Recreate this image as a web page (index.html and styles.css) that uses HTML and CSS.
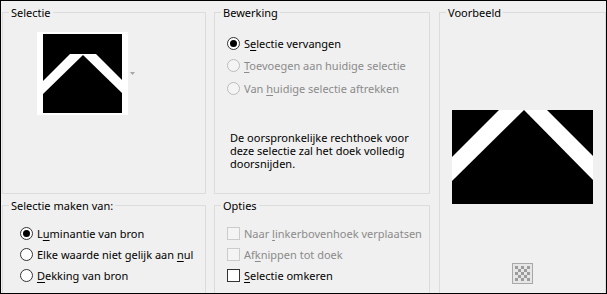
FILE: index.html
```html
<!DOCTYPE html>
<html>
<head>
<meta charset="utf-8">
<link rel="stylesheet" href="styles.css">
</head>
<body>
<div class="window">
  <section class="group g-sel">
    <div class="legend">Selectie</div>
    <div class="thumbrow">
      <div class="thumb">
        <svg width="79" height="79" viewBox="0 0 79 79"><rect width="79" height="79" fill="#000"/><polygon points="0,47 27,20 53,20 79,46 79,59 40,21 0,60" fill="#fff"/></svg>
      </div>
      <svg class="drop" width="5" height="3" viewBox="0 0 5 3"><polygon points="0,0 5,0 2.5,3" fill="#a6a6a6"/></svg>
    </div>
  </section>
  <section class="group g-bew">
    <div class="legend">Bewerking</div>
    <div class="rows rows-bew">
      <div class="opt"><span class="radio on"></span><span>S<u>e</u>lectie vervangen</span></div>
      <div class="opt dis"><span class="radio"></span><span><u>T</u>oevoegen aan huidige selectie</span></div>
      <div class="opt dis"><span class="radio"></span><span>Van <u>h</u>uidige selectie aftrekken</span></div>
    </div>
    <p class="note">De oorspronkelijke rechthoek voor<br>deze selectie zal het doek volledig<br>doorsnijden.</p>
  </section>
  <section class="group g-voor">
    <div class="legend">Voorbeeld</div>
    <div class="preview">
      <svg width="141" height="94" viewBox="0 0 141 94"><rect width="141" height="94" fill="#000"/><polygon points="0,47 47,0 72,0 0,71" fill="#fff"/><polygon points="72,0 95,0 141,46 141,70" fill="#fff"/></svg>
    </div>
    <div class="checker">
      <svg width="15" height="15" viewBox="0 0 15 15">
        <rect width="15" height="15" fill="#e6e6e6"/>
        <g fill="#9c9c9c">
          <rect x="0" y="0" width="3" height="3"/><rect x="6" y="0" width="3" height="3"/><rect x="12" y="0" width="3" height="3"/>
          <rect x="3" y="3" width="3" height="3"/><rect x="9" y="3" width="3" height="3"/>
          <rect x="0" y="6" width="3" height="3"/><rect x="6" y="6" width="3" height="3"/><rect x="12" y="6" width="3" height="3"/>
          <rect x="3" y="9" width="3" height="3"/><rect x="9" y="9" width="3" height="3"/>
          <rect x="0" y="12" width="3" height="3"/><rect x="6" y="12" width="3" height="3"/><rect x="12" y="12" width="3" height="3"/>
        </g>
      </svg>
    </div>
  </section>
  <section class="group g-maak">
    <div class="legend">Selectie maken van:</div>
    <div class="rows rows-low rows-maak">
      <div class="opt"><span class="radio on"></span><span>L<u>u</u>minantie van bron</span></div>
      <div class="opt"><span class="radio"></span><span>Elke waarde niet gelijk aan <u>n</u>ul</span></div>
      <div class="opt"><span class="radio"></span><span><u>D</u>ekking van bron</span></div>
    </div>
  </section>
  <section class="group g-opt">
    <div class="legend">Opties</div>
    <div class="rows rows-low rows-opt">
      <div class="opt dis"><span class="check"></span><span>Naar <u>l</u>inkerbovenhoek verplaatsen</span></div>
      <div class="opt dis"><span class="check"></span><span>Af<u>k</u>nippen tot doek</span></div>
      <div class="opt"><span class="check"></span><span><u>S</u>electie omkeren</span></div>
    </div>
  </section>
</div>
</body>
</html>
```
FILE: styles.css
```css
html, body {
  margin: 0;
  padding: 0;
  background: #f0f0f0;
}
.window {
  width: 607px;
  height: 294px;
  box-sizing: border-box;
  border: 1px solid #000;
  background: #f0f0f0;
  overflow: hidden;
  display: grid;
  grid-template-columns: 204px 216px 168px;
  grid-template-rows: 182px 200px;
  column-gap: 8px;
  row-gap: 11px;
  padding: 11px 0 0 1px;
  font-family: "Noto Sans", "Open Sans", sans-serif;
  font-size: 11px;
  color: #000;
}
.group {
  border: 1px solid #dcdcdc;
  box-sizing: border-box;
  min-width: 0;
}
.g-voor {
  grid-column: 3;
  grid-row: 1 / span 2;
  margin-left: 1px;
  display: flex;
  flex-direction: column;
  align-items: center;
}
.g-sel { grid-column: 1; grid-row: 1; }
.g-bew { grid-column: 2; grid-row: 1; }
.g-maak { grid-column: 1; grid-row: 2; }
.g-opt { grid-column: 2; grid-row: 2; }
.legend {
  margin-top: -8px;
  margin-left: 6px;
  padding: 0 2px;
  width: max-content;
  line-height: 15px;
  background: #f0f0f0;
  align-self: flex-start;
}
.thumbrow {
  display: flex;
  align-items: center;
  margin: 12px 0 0 34px;
}
.thumb {
  background: #fff;
  padding: 2px 6px;
  display: flex;
}
.thumb svg { display: block; }
.drop {
  display: block;
  margin-left: 2px;
}
.rows-bew {
  margin-top: 12px;
  padding-left: 12px;
}
.rows-bew .opt { height: 22.5px; }
.rows-low { margin-top: 10px; }
.rows-low .opt { height: 21px; }
.rows-maak { padding-left: 17px; }
.rows-opt { padding-left: 12px; }
.opt {
  display: flex;
  align-items: center;
  gap: 4px;
  white-space: nowrap;
}
.opt.dis { color: #8b8b8b; }
.radio {
  width: 13px;
  height: 13px;
  box-sizing: border-box;
  border: 1px solid #333;
  border-radius: 50%;
  background: #fff;
  display: flex;
  align-items: center;
  justify-content: center;
  flex: none;
}
.radio.on::after {
  content: "";
  width: 7px;
  height: 7px;
  border-radius: 50%;
  background: #000;
}
.dis .radio {
  border-color: #bcbcbc;
  background: #f4f4f4;
}
.check {
  width: 13px;
  height: 13px;
  box-sizing: border-box;
  border: 1px solid #333;
  background: #fff;
  flex: none;
}
.dis .check {
  border-color: #cccccc;
  background: #f4f4f4;
}
u { text-decoration-thickness: 1px; text-underline-offset: 2px; }
.note {
  margin: 31px 0 0 15px;
  line-height: 13px;
}
.preview {
  margin-top: 90px;
  display: flex;
}
.preview svg { display: block; }
.checker {
  margin-top: 59px;
  width: 21px;
  height: 21px;
  box-sizing: border-box;
  border: 1px solid #a8a8a8;
  background: #e6e6e6;
  display: flex;
  align-items: center;
  justify-content: center;
}
.checker svg { display: block; }
```
